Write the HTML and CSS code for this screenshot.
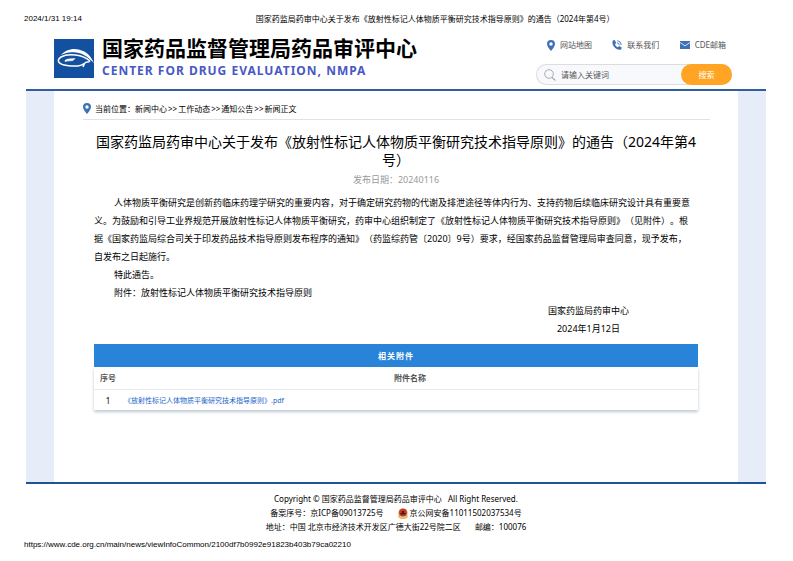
FILE: index.html
```
<!DOCTYPE html>
<html lang="zh-CN">
<head>
<meta charset="utf-8">
<meta name="viewport" content="width=device-width, initial-scale=1">
<title>国家药监局药审中心关于发布《放射性标记人体物质平衡研究技术指导原则》的通告（2024年第4号）</title>
<link rel="stylesheet" href="styles.css">
</head>
<body>
<div class="print-head">
  <span class="print-date">2024/1/31 19:14</span>
  <span>国家药监局药审中心关于发布《放射性标记人体物质平衡研究技术指导原则》的通告（2024年第4号）</span>
</div>

<header class="site-head">
  <div class="brand">
    <svg class="logo" viewBox="0 0 40 39" aria-hidden="true">
      <rect width="40" height="39" fill="#1450a0"/>
      <path d="M7 16C12 10 21 8 29 12C34 14 37 18 40 24C35 19 30 14.500 22 13.500C16 12.500 11 14 7 16Z" fill="#fff"/>
      <path d="M36 22C29 15.500 14 14 7 18C1.500 21.500 5 25.500 13 26.500C20 27.500 27 27.500 30 24.500M36 22C35 24 32 21.500 30.500 24.500L29 28" fill="none" stroke="#fff" stroke-width="1.500"/>
      <path d="M11 21.500C13 19.500 17 20 21 19.500L19 21.500C16 22 14 21.500 11 22.500Z" fill="#fff" stroke="#fff" stroke-width=".6"/>
    </svg>
    <div>
      <div class="brand-name">国家药品监督管理局药品审评中心</div>
      <div class="brand-sub">CENTER FOR DRUG EVALUATION, NMPA</div>
    </div>
  </div>
  <div class="tools">
    <nav class="quick">
      <a href="#"><svg class="pin" viewBox="0 0 8 11" aria-hidden="true"><path fill="#3d72b8" fill-rule="evenodd" d="M4 0a4 4 0 0 1 4 4C8 6.500 5.500 9 4 11C2.500 9 0 6.500 0 4a4 4 0 0 1 4-4ZM4 2.300a1.700 1.700 0 1 0 0 3.400a1.700 1.700 0 0 0 0-3.400Z"/></svg>网站地图</a>
      <a href="#"><svg class="phone" viewBox="0 0 10 10" aria-hidden="true"><path fill="#3d72b8" d="M.8 .6L2.800 0L4.200 3L3 4.200C3.400 5.500 4.500 6.600 5.800 7.200L7 6L9.800 7.500L9 9.700C4.500 10.800-1 5.500 .8 .6Z"/><path d="M5 2.700Q7.200 3 7.300 5.200M5.300.7Q9 1 9.300 5" fill="none" stroke="#3d72b8" stroke-width=".9"/></svg>联系我们</a>
      <a href="#"><svg class="mail" viewBox="0 0 10 8" aria-hidden="true"><rect width="10" height="8" fill="#3d72b8"/><path d="M0 1.500L5 4.800L10 1.500" fill="none" stroke="#fff" stroke-width=".8"/></svg>CDE邮箱</a>
    </nav>
    <form class="search">
      <svg class="lens" viewBox="0 0 12 12" aria-hidden="true"><circle cx="5" cy="5" r="4.300" fill="none" stroke="#aaa"/><path d="M8 8.500L11.500 11.500" stroke="#aaa" stroke-width="1.200"/></svg>
      <input type="text" placeholder="请输入关键词" aria-label="请输入关键词">
      <button type="submit">搜索</button>
    </form>
  </div>
</header>

<main class="frame">
  <nav class="crumbs">
    <svg class="pin" viewBox="0 0 8 11" aria-hidden="true"><path fill="#3d72b8" fill-rule="evenodd" d="M4 0a4 4 0 0 1 4 4C8 6.500 5.500 9 4 11C2.500 9 0 6.500 0 4a4 4 0 0 1 4-4ZM4 2.300a1.700 1.700 0 1 0 0 3.400a1.700 1.700 0 0 0 0-3.400Z"/></svg>
    <span>当前位置：<a href="#">新闻中心</a><span class="sep">&gt;&gt;</span><a href="#">工作动态</a><span class="sep">&gt;&gt;</span><a href="#">通知公告</a><span class="sep">&gt;&gt;</span>新闻正文</span>
  </nav>
  <article class="article">
    <h1>国家药监局药审中心关于发布《放射性标记人体物质平衡研究技术指导原则》的通告（2024年第4号）</h1>
    <div class="pub-date">发布日期：20240116</div>
    <div class="body-text">
      <p>人体物质平衡研究是创新药临床药理学研究的重要内容，对于确定研究药物的代谢及排泄途径等体内行为、支持药物后续临床研究设计具有重要意<br>义。为鼓励和引导工业界规范开展放射性标记人体物质平衡研究，药审中心组织制定了《放射性标记人体物质平衡研究技术指导原则》（见附件）。根<br>据《国家药监局综合司关于印发药品技术指导原则发布程序的通知》（药监综药管〔2020〕9号）要求，经国家药品监督管理局审查同意，现予发布，<br>自发布之日起施行。</p>
      <p>特此通告。</p>
      <p>附件：放射性标记人体物质平衡研究技术指导原则</p>
    </div>
    <div class="signature">国家药监局药审中心<br>2024年1月12日</div>
    <table class="files">
      <caption>相关附件</caption>
      <thead><tr><th class="num">序号</th><th>附件名称</th></tr></thead>
      <tbody><tr><td class="num">1</td><td><a href="#">《放射性标记人体物质平衡研究技术指导原则》.pdf</a></td></tr></tbody>
    </table>
  </article>
</main>

<footer class="site-foot">
  <div>Copyright © 国家药品监督管理局药品审评中心 &nbsp; All Right Reserved.</div>
  <div class="records"><span>备案序号：京ICP备09013725号</span>
    <span class="police"><svg class="badge" viewBox="0 0 10 11" aria-hidden="true"><path d="M1 6L0 9L3 11H7L10 9L9 6Z" fill="#e5b965"/><circle cx="5" cy="4.800" r="4.600" fill="#d9a04c"/><circle cx="5" cy="4.600" r="3.900" fill="#c9382a"/><path d="M2 5H8L7 6.500H3ZM4 3H6V5H4Z" fill="#421e24"/><path d="M2 8.500Q5 10.500 8 8.500" fill="none" stroke="#f0cf86"/></svg>京公网安备11011502037534号</span></div>
  <div class="address"><span>地址：中国 北京市经济技术开发区广德大街22号院二区</span><span>邮编：100076</span></div>
</footer>
<div class="print-url">https://www.cde.org.cn/main/news/viewInfoCommon/2100df7b0992e91823b403b79ca02210</div>
</body>
</html>
```
FILE: styles.css
```
* { box-sizing: border-box; }

body {
  margin: 0;
  background: #fff;
  color: #000;
  font: 8px/14px "Noto Sans", "Noto Sans CJK SC", sans-serif;
  text-spacing-trim: space-all;
}

a { color: inherit; text-decoration: none; }
svg { flex: none; display: block; }

.print-head {
  display: grid;
  grid-template-columns: 3fr auto 2fr;
  padding: 12px 24px 0;
}
.print-date, .print-url { font-family: "Liberation Sans", sans-serif; }

.site-head {
  display: flex;
  justify-content: space-between;
  margin: 11px 27px 0 26px;
  padding: 0 34px 4px 28px;
  border-bottom: 2px solid #315e9f;
}
.brand { display: flex; gap: 8px; padding-top: 2px; }
.logo { width: 40px; height: 39px; }
.brand-name {
  font-size: 21px;
  line-height: 18px;
  font-weight: 700;
  white-space: nowrap;
}
.brand-sub {
  margin-top: 4px;
  color: #4858c4;
  font: 700 12px/20px "Noto Sans", sans-serif;
  letter-spacing: 1px;
  white-space: nowrap;
}

.tools { width: 196px; padding-top: 1px; }
.quick {
  display: flex;
  justify-content: space-between;
  padding: 0 6px 0 11px;
  color: #555;
}
.quick a { display: flex; align-items: center; gap: 5px; }
.pin { width: 8px; height: 11px; }
.phone { width: 10px; height: 10px; }
.mail { width: 10px; height: 8px; }

.search {
  display: flex;
  align-items: center;
  gap: 5px;
  height: 21px;
  margin-top: 12px;
  padding-left: 8px;
  border-radius: 11px;
  background: #f8f9fd;
  box-shadow: inset 0 0 0 1px #ddd;
}
.lens { width: 12px; height: 12px; }
.search input {
  flex: 1;
  min-width: 0;
  padding: 0;
  border: 0;
  outline: 0;
  background: transparent;
  color: #333;
  font: inherit;
}
.search input::placeholder { color: #555; }
.search button {
  align-self: stretch;
  width: 51px;
  padding: 0;
  border: 0;
  border-radius: 11px;
  background: #ffa423;
  color: #fff;
  font: inherit;
}

.frame {
  margin: 0 27px 0 26px;
  padding: 10px 28px 72px 29px;
  border: solid #e6ecf8;
  border-width: 0 28px;
}
.crumbs {
  display: flex;
  align-items: center;
  gap: 4px;
  padding-bottom: 3px;
  border-bottom: 1px solid #e2e2e2;
  line-height: 15px;
}
.sep { padding: 0 1px; }
.article { padding: 13px 12px 0 11px; }
h1 {
  margin: 0;
  font-size: 14px;
  line-height: 18px;
  font-weight: 400;
  text-align: center;
}
.pub-date {
  margin: 2px 0 5px;
  color: #999;
  font-size: 9px;
  line-height: 18px;
  text-align: center;
}
.body-text, .signature { font-size: 9px; line-height: 18px; }
.body-text p { margin: 0; text-indent: 20px; white-space: nowrap; }
.signature {
  width: max-content;
  margin: 0 69px 6px auto;
  text-align: center;
}

.files {
  width: 100%;
  border-collapse: collapse;
  box-shadow: 0 2px 3px #bfcad2;
}
.files caption {
  background: #2983d8;
  color: #fff;
  font-weight: 700;
  line-height: 23px;
  letter-spacing: 1px;
}
.files th { padding: 0; color: #555; font-weight: 700; line-height: 22px; }
.files td { padding: 0 2px; line-height: 19px; border-top: 1px solid #e4e9ee; }
.files .num { width: 28px; text-align: center; }
.files a { color: #2165c9; font-size: 7px; }

.site-foot {
  margin: 0 27px 0 26px;
  padding-top: 8px;
  border-top: 2px solid #1f5297;
  text-align: center;
}
.records, .address { display: flex; justify-content: center; gap: 14px; }
.police { display: flex; align-items: center; gap: 2px; }
.badge { width: 10px; height: 11px; }
.print-url { padding: 4px 24px 0; }
```
